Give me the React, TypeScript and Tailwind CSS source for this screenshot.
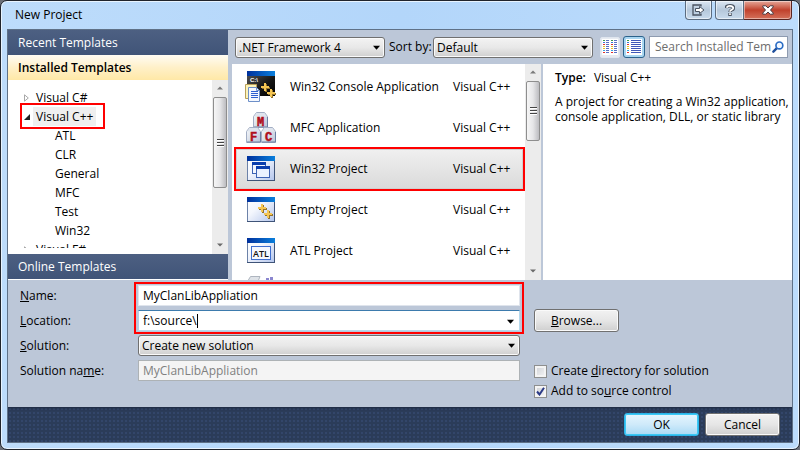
import type { ReactNode } from "react";

const templates: { name: string; icon: ReactNode; selected?: boolean }[] = [
  { name: "Win32 Console Application", icon: <ConsoleIcon /> },
  { name: "MFC Application", icon: <MfcIcon /> },
  { name: "Win32 Project", icon: <Win32Icon />, selected: true },
  { name: "Empty Project", icon: <EmptyIcon /> },
  { name: "ATL Project", icon: <AtlIcon /> },
];

const cppChildren = ["ATL", "CLR", "General", "MFC", "Test", "Win32"];

function IconDefs() {
  return (
    <svg className="absolute size-0" aria-hidden="true">
      <defs>
        <linearGradient id="titleGrad" x1="0" y1="0" x2="1" y2="0">
          <stop offset="0" stopColor="#00309c" />
          <stop offset="1" stopColor="#0a7fdc" />
        </linearGradient>
        <linearGradient id="bodyGrad" x1="0" y1="0" x2="1" y2="1">
          <stop offset="0" stopColor="#ffffff" />
          <stop offset="0.4" stopColor="#f3f6fd" />
          <stop offset="1" stopColor="#b3c5ec" />
        </linearGradient>
        <linearGradient id="cubeGrad" x1="0" y1="0" x2="1" y2="1">
          <stop offset="0" stopColor="#fafbfd" />
          <stop offset="1" stopColor="#b9c4d6" />
        </linearGradient>
        <linearGradient id="blackGrad" x1="0" y1="0" x2="1" y2="1">
          <stop offset="0" stopColor="#5a5a5a" />
          <stop offset="0.6" stopColor="#161616" />
          <stop offset="1" stopColor="#000000" />
        </linearGradient>
      </defs>
    </svg>
  );
}

function Pluses({ x, y }: { x: number; y: number }) {
  return (
    <g transform={`translate(${x} ${y})`} fill="none">
      <path d="M5 1v8M1 5h8" stroke="#94742c" strokeWidth="2" />
      <path d="M4 0v8M0 4h8" stroke="#f5c654" strokeWidth="2" />
      <path d="M11 7v8M7 11h8" stroke="#94742c" strokeWidth="2" />
      <path d="M10 6v8M6 10h8" stroke="#f5c654" strokeWidth="2" />
    </g>
  );
}

function WindowFrame() {
  return (
    <>
      <rect x="2.500" y="3.500" width="27" height="24" fill="url(#bodyGrad)" stroke="#6c82a8" />
      <rect x="2" y="3" width="28" height="5" fill="url(#titleGrad)" />
      <path d="M2 27.500h28M29.500 8v20" stroke="#3f5478" />
    </>
  );
}

function ConsoleIcon() {
  return (
    <svg className="size-8 shrink-0" viewBox="0 0 32 32" aria-hidden="true">
      <rect x="2" y="0" width="28" height="25" fill="url(#blackGrad)" />
      <rect x="2" y="0" width="28" height="5" fill="url(#titleGrad)" />
      <text x="5" y="11" fontSize="6" fontWeight="700" fill="#fff" fontFamily="'Liberation Sans', sans-serif">C:\</text>
      <path d="M.5 13.500h11v14h-11z" fill="#fdf3b8" stroke="#b9a05a" />
      <path d="M3.500 16.500h8l3 3v11h-11z" fill="#f4f8ff" stroke="#6d8fc8" />
      <path d="M11.500 16.500v3h3" fill="none" stroke="#6d8fc8" />
      <path d="M6 20.500h7M6 22.500h7M6 24.500h7M6 26.500h7" stroke="#2d5fd0" />
      <Pluses x={16} y={12} />
    </svg>
  );
}

function Cube({ x, y, letter }: { x: number; y: number; letter: string }) {
  return (
    <g transform={`translate(${x} ${y})`}>
      <path d="M.5 4.500 3.500 .5h8l3 4v11H.5z" fill="url(#cubeGrad)" stroke="#a3aec4" />
      <path d="M1 4.500 4 1h7l3 3.500z" fill="#dfe5ee" />
      <path d="M1 15h13.500V5" fill="none" stroke="#6c7fa4" />
      <text x="7.500" y="14" textAnchor="middle" fontSize="12" fontWeight="700" fill="#b00f1c" stroke="#b00f1c" strokeWidth=".5" fontFamily="'Liberation Mono', monospace">{letter}</text>
    </g>
  );
}

function MfcIcon() {
  return (
    <svg className="size-8 shrink-0" viewBox="0 0 32 32" aria-hidden="true">
      <Cube x={8} y={0} letter="M" />
      <Cube x={1} y={15} letter="F" />
      <Cube x={16} y={15} letter="C" />
    </svg>
  );
}

function Win32Icon() {
  return (
    <svg className="size-8 shrink-0" viewBox="0 0 32 32" aria-hidden="true">
      <WindowFrame />
      <rect x="7.500" y="9.500" width="13" height="11" fill="#f3f7ff" stroke="#3c62b4" />
      <rect x="7" y="9" width="14" height="3" fill="#0c3fae" />
      <rect x="11.500" y="13.500" width="13" height="11" fill="#eaf1ff" stroke="#3c62b4" />
      <rect x="11" y="13" width="14" height="3" fill="#0c3fae" />
    </svg>
  );
}

function EmptyIcon() {
  return (
    <svg className="size-8 shrink-0" viewBox="0 0 32 32" aria-hidden="true">
      <WindowFrame />
      <Pluses x={13} y={10} />
    </svg>
  );
}

function AtlIcon() {
  return (
    <svg className="size-8 shrink-0" viewBox="0 0 32 32" aria-hidden="true">
      <WindowFrame />
      <rect x="6.500" y="11.500" width="19" height="13" fill="#f4f7fe" stroke="#3f6fd0" />
      <text x="16" y="22" textAnchor="middle" fontSize="9" fontWeight="600" fill="#111" fontFamily="'Open Sans', sans-serif">ATL</text>
    </svg>
  );
}

function ClassLibIcon() {
  return (
    <svg className="size-8 shrink-0" viewBox="0 0 32 32" aria-hidden="true">
      <path d="M1 8 5.500 .5H15L12 8z" fill="#dfe3e8" stroke="#aeb5bf" />
      <path d="M18 4h3V2h3v2h1V1h3v3h3v6H18z" fill="#8b86cf" />
      <path d="M20 5h2v2h-2zM26 5h2v2h-2z" fill="#4a45a0" />
    </svg>
  );
}

function Caret() {
  return (
    <svg className="pointer-events-none absolute top-2 right-[5px] h-[5px] w-[7px]" viewBox="0 0 8 5" aria-hidden="true">
      <path d="M0 .5h8L4 5z" fill="#000" />
    </svg>
  );
}

function Scrollbar({ thumb }: { thumb: string }) {
  return (
    <div className="flex w-4 shrink-0 flex-col items-center bg-[#ececec]">
      <svg className="my-[6px] h-1 w-[6px] shrink-0" viewBox="0 0 8 4" aria-hidden="true">
        <path d="M0 4h8L4 0z" fill="#7a7a7a" />
      </svg>
      <div className={`mt-px flex w-[14px] shrink-0 items-center justify-center rounded-[2px] border border-[#8e8e8e] bg-linear-to-r from-[#f6f6f6] via-[#e6e6e8] to-[#bcbcc0] ${thumb}`}>
        <svg className="h-2 w-[7px]" viewBox="0 0 7 8" aria-hidden="true">
          <path d="M0 .5h7M0 3.500h7M0 6.500h7" stroke="#444" />
          <path d="M0 1.500h7M0 4.500h7M0 7.500h7" stroke="#fff" />
        </svg>
      </div>
      <svg className="mt-auto mb-[7px] h-1 w-[6px] shrink-0" viewBox="0 0 8 4" aria-hidden="true">
        <path d="M0 0h8L4 4z" fill="#6a6a6a" />
      </svg>
    </div>
  );
}

function Select({ id, value, label, className = "" }: { id: string; value: string; label?: string; className?: string }) {
  return (
    <div className={`relative ${className}`}>
      <select
        id={id}
        aria-label={label}
        defaultValue={value}
        className="block h-[21px] w-full appearance-none rounded-[3px] border border-[#707070] bg-linear-to-b from-[#f3f3f3] via-[#e8e8e8] to-[#cfcfcf] pr-4 pl-[3px] leading-[19px] shadow-[inset_0_0_0_1px_#fafafa]"
      >
        <option>{value}</option>
      </select>
      <Caret />
    </div>
  );
}

function ViewIcon({ wide }: { wide?: boolean }) {
  const rows = [1, 3, 5, 7, 9, 11, 13];
  const colors = ["#3a9a4a", "#3a7ad0", "#e03030", "#e8c020", "#e8c020", "#38a0e0", "#e03030"];
  return (
    <svg className="size-4" viewBox="0 0 16 16" aria-hidden="true">
      <rect width="16" height="16" fill="#fff" />
      {rows.map((y, i) => (
        <g key={y}>
          <rect x="1" y={y} width="2" height="1" fill={colors[i]} />
          {wide ? (
            <path d={`M5 ${y + 0.5}h10`} stroke="#4058b8" />
          ) : (
            <>
              <path d={`M4 ${y + 0.5}h3M12 ${y + 0.5}h3`} stroke="#5a70c4" />
              <rect x="9" y={y} width="2" height="1" fill={colors[i]} />
            </>
          )}
        </g>
      ))}
    </svg>
  );
}

function TitleBar() {
  return (
    <header className="flex h-7 shrink-0 items-start justify-between pl-2">
      <h1 className="pt-[6px] leading-4">New Project</h1>
      <div className="flex h-[19px] pr-px">
        <button aria-label="Pop out" className="mr-[3px] flex w-[27px] items-center justify-center rounded-b-[4px] border border-t-0 border-[#5b6c80] bg-linear-to-b from-[#dce7f3] via-[#b5c7da] to-[#c9dbed] shadow-[inset_0_0_0_1px_#ffffff90]">
          <svg className="h-3 w-[13px]" viewBox="0 0 13 12" aria-hidden="true">
            <path d="M9 2.500V1H1v10h8V9.500" fill="none" stroke="#4a5361" strokeWidth="1.300" />
            <path d="M3.500 4.500h4v-2L12 6 7.500 9.500v-2h-4z" fill="#fff" stroke="#4a5361" />
          </svg>
        </button>
        <button aria-label="Help" className="flex w-[29px] items-center justify-center rounded-bl-[4px] border border-t-0 border-[#5b6c80] bg-linear-to-b from-[#dce7f3] via-[#b5c7da] to-[#c9dbed] shadow-[inset_0_0_0_1px_#ffffff90]">
          <svg className="h-3 w-[10px]" viewBox="0 0 10 12" aria-hidden="true">
            <path d="M1 4Q1.200 1.700 5 1.700T8.500 4Q8.500 5.200 6.500 6 5 6.600 5 8M5 9v3" fill="none" stroke="#4a5361" strokeWidth="3.400" />
            <path d="M1.700 3.800Q2.200 1.800 5 1.800T8.300 4Q8.300 5.200 6.500 5.900 5 6.400 5 7.700M5 9.300v1.700" fill="none" stroke="#fff" strokeWidth="1.700" />
          </svg>
        </button>
        <button aria-label="Close" className="flex w-12 items-center justify-center rounded-br-[4px] border border-t-0 border-l-0 border-[#5a2420] bg-linear-to-b from-[#e5a698] via-[#c0402c] to-[#d4705a] shadow-[inset_0_0_0_1px_#ffffff70]">
          <svg className="h-[10px] w-3" viewBox="0 0 12 10" aria-hidden="true">
            <path d="M.8 .8h3L6 3 8.200 .8h3V2L8.500 5l2.700 3v1.200h-3L6 7 3.800 9.200h-3V8l2.700-3L.8 2z" fill="#fff" stroke="#4b3a40" />
          </svg>
        </button>
      </div>
    </header>
  );
}

function Sidebar() {
  return (
    <nav className="mr-1 flex w-[220px] shrink-0 flex-col bg-white">
      <button className="h-[25px] shrink-0 bg-linear-to-b from-[#4d6082] to-[#405478] pl-[10px] text-left text-white">Recent Templates</button>
      <button className="h-[25px] shrink-0 bg-linear-to-b from-[#fffcf3] via-[#fff0c8] via-50% to-[#ffe8a6] pl-[10px] text-left font-semibold">Installed Templates</button>
      <div className="flex min-h-0 flex-1">
        <div className="mb-[6px] flex-1 overflow-hidden pt-2 pl-4 leading-[19px]">
          <div className="flex items-center">
            <svg className="mr-[7px] h-2 w-[5px]" viewBox="0 0 5 8" aria-hidden="true">
              <path d="M.5 .8 4.300 4 .5 7.200z" fill="#fff" stroke="#a8a8a8" />
            </svg>
            Visual C#
          </div>
          <div className="relative flex w-[77px] items-center">
            <svg className="mr-[3px] h-[6px] w-[6px]" viewBox="0 0 6 6" aria-hidden="true">
              <path d="M6 0v6H0z" fill="#222" />
            </svg>
            <span className="h-[19px] bg-[#efefef] px-[3px]">Visual C++</span>
            <span className="pointer-events-none absolute -top-1 -right-1 -bottom-[3px] -left-1 border-2 border-[#f00]" />
          </div>
          {cppChildren.map((name) => (
            <div key={name} className="pl-[31px]">{name}</div>
          ))}
          <div className="flex items-center">
            <svg className="mr-[7px] h-2 w-[5px]" viewBox="0 0 5 8" aria-hidden="true">
              <path d="M.5 .8 4.300 4 .5 7.200z" fill="#fff" stroke="#a8a8a8" />
            </svg>
            Visual F#
          </div>
        </div>
        <Scrollbar thumb="h-[91px]" />
      </div>
      <button className="h-[25px] shrink-0 bg-linear-to-b from-[#4d6082] to-[#405478] pl-[10px] text-left text-white">Online Templates</button>
      <div className="h-px shrink-0 bg-white" />
    </nav>
  );
}

function Toolbar() {
  return (
    <div className="flex h-[34px] shrink-0 items-center pr-1 pl-[3px]">
      <Select id="framework" label="Framework" value=".NET Framework 4" className="w-[150px]" />
      <label htmlFor="sort" className="ml-1 w-11 whitespace-nowrap">Sort by:</label>
      <Select id="sort" value="Default" className="w-[160px]" />
      <button aria-label="Small icons" className="ml-[7px] flex h-[21px] w-5 items-center justify-center rounded-[2px] border border-[#dfe5ee] bg-[#e6eaf1]">
        <ViewIcon />
      </button>
      <button aria-label="Medium icons" className="ml-[3px] flex h-[22px] w-[22px] items-center justify-center rounded-[3px] border border-[#2c628b] bg-[#a9d6f2]">
        <ViewIcon wide />
      </button>
      <div className="ml-1 flex h-[22px] min-w-0 flex-1 items-center border border-[#8e9bb0] bg-white pr-[3px] pl-[5px]">
        <input aria-label="Search Installed Templates" placeholder="Search Installed Tem" className="min-w-0 flex-1 placeholder:text-[#6d6d6d] focus:outline-none" />
        <svg className="size-3 shrink-0" viewBox="0 0 13 13" aria-hidden="true">
          <path d="M5 8 1.500 11.500" stroke="#1f4f9c" strokeWidth="2.600" strokeLinecap="round" />
          <circle cx="8" cy="4.800" r="3.700" fill="#f2f8ff" stroke="#2a6cc4" strokeWidth="1.800" />
        </svg>
      </div>
    </div>
  );
}

function TemplateList() {
  return (
    <div className="flex w-[309px] shrink-0 bg-white">
      <ul className="flex flex-1 flex-col gap-px overflow-hidden pt-[3px] pr-[2px] pl-1">
        {templates.map((t) => (
          <li
            key={t.name}
            className={`flex h-10 shrink-0 items-center pl-[9px] ${t.selected ? "relative bg-linear-to-b from-[#f0f0f0] to-[#dadada] shadow-[inset_0_0_0_1px_#cfcfcf] outline-2 outline-[#f00]" : ""}`}
          >
            {t.icon}
            <span className="ml-[13px] flex-1 whitespace-nowrap">{t.name}</span>
            <span className="w-[70px] whitespace-nowrap">Visual C++</span>
          </li>
        ))}
        <li className="flex h-10 shrink-0 items-center pl-[9px]">
          <ClassLibIcon />
        </li>
      </ul>
      <Scrollbar thumb="h-[60px]" />
    </div>
  );
}

const field = "block h-[21px] w-full border bg-white px-1 leading-[19px] focus:outline-none";

function Form() {
  return (
    <section className="flex shrink-0 pt-[5px] pb-[6px] pl-3">
      <div className="flex w-[118px] shrink-0 flex-col gap-1 leading-[21px]">
        <label htmlFor="name"><u>N</u>ame:</label>
        <label htmlFor="location"><u>L</u>ocation:</label>
        <label htmlFor="solution"><u>S</u>olution:</label>
        <label htmlFor="solutionName">Solution na<u>m</u>e:</label>
      </div>
      <div className="flex w-[382px] shrink-0 flex-col gap-1">
        <div className="relative flex flex-col gap-1">
          <input id="name" defaultValue="MyClanLibAppliation" className={`${field} border-[#dfe4ec]`} />
          <div className="relative flex h-[21px] items-center border border-t-[#3d7bad] border-r-[#b7d9ed] border-b-[#b7d9ed] border-l-[#b5cfe7] bg-white pl-1">
            <input id="location" defaultValue="f:\source\" className="field-sizing-content focus:outline-none" />
            <span className="h-[14px] w-px bg-black" />
            <Caret />
          </div>
          <span className="pointer-events-none absolute -inset-x-1 -inset-y-[3px] border-2 border-[#f00]" />
        </div>
        <Select id="solution" value="Create new solution" />
        <input id="solutionName" disabled defaultValue="MyClanLibAppliation" className="block h-[21px] w-full border border-[#adb2b5] bg-[#f4f4f4] px-1 leading-[19px] text-[#808080]" />
      </div>
      <div className="ml-[14px] flex flex-col items-start pt-6">
        <button className="h-[23px] w-[85px] rounded-[3px] border border-[#707070] bg-linear-to-b from-[#f2f2f2] via-[#e6e6e6] to-[#cfcfcf] shadow-[inset_0_0_0_1px_#fafafa]">
          <u>B</u>rowse...
        </button>
        <label className="mt-[29px] flex h-5 items-center gap-1 whitespace-nowrap">
          <input type="checkbox" className="size-[13px] appearance-none border border-[#8e8f8f] bg-linear-to-br from-[#cdd0d6] to-[#f6f6f6] shadow-[inset_0_0_0_2px_#f4f4f4]" />
          <span>Create <u>d</u>irectory for solution</span>
        </label>
        <label className="relative flex h-5 items-center gap-1 whitespace-nowrap">
          <input type="checkbox" defaultChecked className="peer size-[13px] appearance-none border border-[#8e8f8f] bg-linear-to-br from-[#cdd0d6] to-[#f6f6f6] shadow-[inset_0_0_0_2px_#f4f4f4]" />
          <svg className="pointer-events-none invisible absolute left-[2px] size-[9px] peer-checked:visible" viewBox="0 0 9 9" aria-hidden="true">
            <path d="M1 4.500 3.500 7.500 8 .8" fill="none" stroke="#2b3a87" strokeWidth="2" />
          </svg>
          <span>Add to so<u>u</u>rce control</span>
        </label>
      </div>
    </section>
  );
}

export default function App() {
  return (
    <div className="h-screen min-h-[450px] bg-[#6b6f78] font-['Open_Sans','Noto_Sans',sans-serif] text-[12px] leading-4 text-black">
      <IconDefs />
      <main className="flex h-full flex-col rounded-[7px] border border-[#20242c] bg-linear-to-r from-[#bddcfb] via-[#b3d6fa] to-[#bcdcfc] px-[6px] pb-[6px] shadow-[inset_0_0_0_1px_#e8f4ff]">
        <TitleBar />
        <div className="flex min-h-0 flex-1 flex-col border border-[#5f7187] bg-[#bcc7d8]">
          <div className="flex min-h-0 flex-1">
            <Sidebar />
            <div className="flex min-w-0 flex-1 flex-col">
              <Toolbar />
              <div className="flex min-h-0 flex-1">
                <TemplateList />
                <section className="ml-[2px] flex-1 bg-white pt-[6px] pl-3">
                  <p><b className="mr-2 font-semibold">Type:</b>Visual C++</p>
                  <p className="mt-2 leading-[15px]">A project for creating a Win32 application, console application, DLL, or static library</p>
                </section>
              </div>
            </div>
          </div>
          <Form />
          <footer className="flex h-[35px] shrink-0 items-center justify-end gap-[6px] bg-[#2b3c59] bg-[radial-gradient(circle,#33466a_1px,transparent_1px)] bg-size-[4px_4px] pr-3 shadow-[inset_0_3px_3px_-2px_#1c2840]">
            <button className="h-[23px] w-[75px] rounded-[3px] border border-[#2ab4e8] bg-linear-to-b from-[#e6f5fd] via-[#cfeafa] to-[#a8daf5] shadow-[inset_0_0_0_1px_#3cc8f4]">OK</button>
            <button className="h-[23px] w-[75px] rounded-[3px] border border-[#707070] bg-linear-to-b from-[#f2f2f2] via-[#e6e6e6] to-[#cfcfcf] shadow-[inset_0_0_0_1px_#fafafa]">Cancel</button>
          </footer>
        </div>
      </main>
    </div>
  );
}
